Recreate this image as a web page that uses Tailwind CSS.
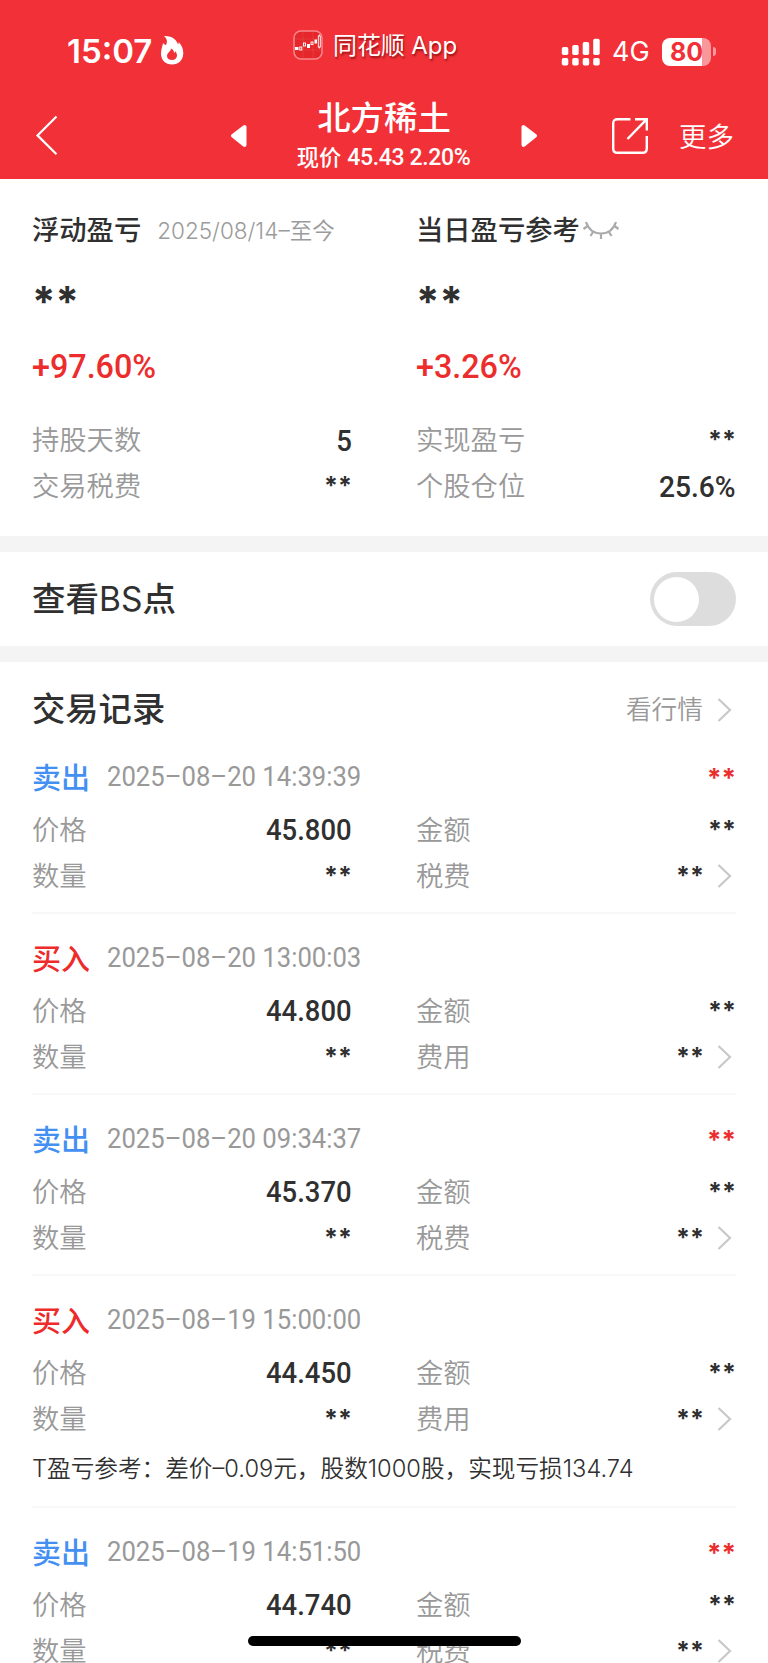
<!DOCTYPE html>
<html lang="zh-CN">
<head>
<meta charset="utf-8">
<title>北方稀土</title>
<script src="https://cdn.jsdelivr.net/npm/@tailwindcss/browser@4"></script>
</head>
<body class="w-[768px] h-[1663px] overflow-hidden relative bg-white text-[#303030] font-['Inter','Noto_Sans_CJK_SC',sans-serif] whitespace-nowrap">

<header class="h-[179px] bg-[#f23037] text-white">
  <div class="h-[90px] flex items-start">
    <div class="w-[293px] pl-[67px] pt-[31px] flex items-center">
      <span class="text-[33px] leading-[40px] font-semibold w-[91px]">15:07</span>
      <svg class="ml-[2px] -mt-[2px]" width="24" height="30" viewBox="0 0 24 30"><path fill="#fff" fill-rule="evenodd" d="M4 1C12 .5 17 5 18 9.500C18.500 9 18.700 8 18.600 7C21.800 10 23.300 14 23.300 18C23.300 25 18.500 29.500 12 29.500C5.500 29.500 1 25 1 18.700C1 14.500 2.500 11.500 3 8C4 9 5 10 6 10C7.500 7 7.500 4 4 1ZM11 13.500C11 16.500 7 17.500 7 21C7 23.500 9.200 25 12 25C15 25 17 23.200 17 20.500C17 18.500 16 17 15.200 16.200C15 17.200 14.600 17.800 14 18C14.200 16 13 14.500 11 13.500Z"/></svg>
    </div>
    <div class="pt-[30px] flex items-start w-[268px]">
      <svg width="30" height="30" viewBox="0 0 30 30"><rect x="1" y="1" width="28" height="28" rx="7" fill="#e5262b" stroke="#f7888c" stroke-width="1.500"/><g stroke="#f7888c" stroke-width=".2"><path d="M2 9H28M2 20H28M10 2V28M20 2V28"/></g><g fill="#fff"><rect x="2" y="17" width="3.500" height="3"/><rect x="14" y="14" width="3" height="4"/><rect x="21.500" y="9.500" width="2.500" height="4"/></g><g fill="none" stroke="#fff" stroke-width=".9"><rect x="6.800" y="17" width="2" height="3"/><rect x="10.500" y="13" width="2" height="3"/><rect x="18" y="12" width="2" height="2.500"/><rect x="25.300" y="6" width="2" height="11"/><path d="M26.300 4.500V6M26.300 17V18.500"/></g></svg>
      <span class="ml-[10px] text-[24px] leading-[31px] tracking-[-0.1px] [text-shadow:1px_2px_2px_rgba(90,0,0,0.6)]">同花顺 App</span>
    </div>
    <div class="pt-[37px] flex items-center">
      <svg width="40" height="28" viewBox="0 0 40 28" fill="#fff"><rect x=".8" y="9" width="6.500" height="8" rx="1.800"/><rect x="11.200" y="7" width="6.500" height="10" rx="1.800"/><rect x="21.700" y="4" width="6.500" height="13" rx="1.800"/><rect x="32.200" y=".8" width="6.500" height="16.200" rx="1.800"/><rect x=".8" y="20" width="6.500" height="7.500" rx="1.800"/><rect x="11.200" y="20" width="6.500" height="7.500" rx="1.800"/><rect x="21.700" y="20" width="6.500" height="7.500" rx="1.800"/><rect x="32.200" y="20" width="6.500" height="7.500" rx="1.800"/></svg>
      <span class="ml-[11px] w-[50px] text-[27px] leading-[28px] pt-px">4G</span>
      <div class="w-[49px] h-[28px] rounded-[8px] bg-[linear-gradient(90deg,#fff_0_81%,#f8989b_81%_100%)] text-[#f23037] text-[25px] leading-[28px] font-bold text-center">80</div>
      <div class="ml-[2px] w-[3px] h-[9px] rounded-r-full bg-[#f8989b]"></div>
    </div>
  </div>
  <div class="h-[89px] flex items-start">
    <svg class="ml-[35px] mt-[25px]" width="24" height="42" viewBox="0 0 24 42"><path d="M21.500 1.500L2.500 20.400L21.500 39.300" fill="none" stroke="#fff" stroke-width="2.200"/></svg>
    <svg class="ml-[171px] mt-[34px]" width="18" height="24" viewBox="0 0 18 24"><path d="M3 11.800L14.500 3V21Z" fill="#fff" stroke="#fff" stroke-width="4" stroke-linejoin="round"/></svg>
    <div class="w-[272px] text-center">
      <div class="mt-[8px] text-[33.400px] leading-[40px] font-medium">北方稀土</div>
      <div class="text-[22.300px] leading-[30px] mt-[4px] font-medium flex justify-center items-center gap-[6px]"><span>现价</span><span class="w-[124px] text-left font-['Roboto'] text-[23px] tracking-[-0.350px] pt-px">45.43 2.20%</span></div>
    </div>
    <svg class="mt-[34px]" width="18" height="24" viewBox="0 0 18 24"><path d="M15 11.800L3.500 3V21Z" fill="#fff" stroke="#fff" stroke-width="4" stroke-linejoin="round"/></svg>
    <svg class="ml-[73px] mt-[27px]" width="38" height="38" viewBox="0 0 38 38"><path d="M19.500 2.200H6.500Q2.200 2.200 2.200 6.500V31.500Q2.200 35.800 6.500 35.800H31.500Q35.800 35.800 35.800 31.500V19M24 2.200H35.800V13.500M35.300 2.700L16.500 22" fill="none" stroke="#fff" stroke-width="2.400"/></svg>
    <span class="ml-[30px] mt-[27px] text-[27.500px] leading-[40px] font-[350]">更多</span>
  </div>
</header>

<section class="h-[357px] px-8 grid grid-cols-[320px_320px] gap-x-[64px] pt-[32px]">
  <div class="w-[320px]">
    <div class="h-[40px] flex items-center"><span class="text-[27.300px] font-medium">浮动盈亏</span><span class="ml-[16px] text-[#9b9b9b] text-[22.500px] font-[350]">2025/08/14–至今</span></div>
    <div class="h-[44px] mt-[21px] flex items-center text-[42px] font-bold pt-[14px]">**</div>
    <div class="h-[40px] mt-[30px] flex items-center"><span class="font-['Roboto'] text-[34px] font-medium text-[#ec2d2d] inline-block origin-left scale-x-[0.95]">+97.60%</span></div>
    <div class="h-[46px] mt-[32px] flex items-center justify-between"><span class="text-[27.300px] font-[350] text-[#999]">持股天数</span><span class="font-['Roboto'] text-[30px] font-medium inline-block origin-right scale-x-[0.92] pb-[2px]">5</span></div>
    <div class="h-[46px] flex items-center justify-between"><span class="text-[27.300px] font-[350] text-[#999]">交易税费</span><span class="text-[25px] font-bold">**</span></div>
  </div>
  <div class="w-[320px]">
    <div class="h-[40px] flex items-center"><span class="text-[27.300px] font-medium">当日盈亏参考</span>
      <svg class="ml-[2px] -mt-[2px]" width="38" height="20" viewBox="0 0 38 20"><path d="M4 2Q8 13.500 19 13.500Q30 13.500 34 2M5.500 6L1.500 9M32.500 6L36.500 9M11 12L8.500 16M27 12L29.500 16M19 13.500V19" fill="none" stroke="#aaa" stroke-width="2.200"/></svg></div>
    <div class="h-[44px] mt-[21px] flex items-center text-[42px] font-bold pt-[14px]">**</div>
    <div class="h-[40px] mt-[30px] flex items-center"><span class="font-['Roboto'] text-[34px] font-medium text-[#ec2d2d] inline-block origin-left scale-x-[0.95]">+3.26%</span></div>
    <div class="h-[46px] mt-[32px] flex items-center justify-between"><span class="text-[27.300px] font-[350] text-[#999]">实现盈亏</span><span class="text-[25px] font-bold">**</span></div>
    <div class="h-[46px] flex items-center justify-between"><span class="text-[27.300px] font-[350] text-[#999]">个股仓位</span><span class="font-['Roboto'] text-[30px] font-medium inline-block origin-right scale-x-[0.94] pb-px">25.6%</span></div>
  </div>
</section>

<section class="h-[126px] border-y-[16px] border-[#f4f4f4] px-8 flex items-center justify-between">
  <span class="text-[33.500px] font-medium"><span>查看</span><span class="font-normal">BS</span><span>点</span></span>
  <div class="w-[86px] h-[54px] rounded-full bg-[#ddd] p-[4px] flex items-center"><div class="size-[45px] rounded-full bg-white"></div></div>
</section>

<main class="px-8">
  <div class="h-[94px] flex items-center justify-between">
    <h2 class="text-[33.300px] font-medium pt-px">交易记录</h2>
    <div class="flex items-center pt-[2px] text-[25.700px] font-[350] text-[#999]">看行情<svg class="ml-[14px] mr-[4px]" width="15" height="24" viewBox="0 0 15 24"><path d="M1.500 1L13 12L1.500 23" fill="none" stroke="#c8c8c8" stroke-width="2.200"/></svg></div>
  </div>
  <div id="records"></div>
</main>

<div class="absolute left-[248px] top-[1636px] w-[273px] h-[10px] rounded-full bg-black"></div>

<script>
const records = [
  ['卖出', '2025–08–20 14:39:39', '45.800', '税费'],
  ['买入', '2025–08–20 13:00:03', '44.800', '费用'],
  ['卖出', '2025–08–20 09:34:37', '45.370', '税费'],
  ['买入', '2025–08–19 15:00:00', '44.450', '费用', 'T盈亏参考：差价–0.09元，股数1000股，实现亏损134.74'],
  ['卖出', '2025–08–19 14:51:50', '44.740', '税费'],
];
document.getElementById('records').innerHTML = records.map(([side, time, price, fee, note]) => `
  <article class="border-b-2 border-[#f8f8f8] ${note ? 'h-[209px]' : 'h-[158px]'} mb-[23px]">
    <div class="h-[46px] flex items-center">
      <span class="text-[29px] font-medium ${side === '卖出' ? 'text-[#4390f2]' : 'text-[#ee2a2a]'}">${side}</span>
      <span class="ml-[17px] font-['Roboto'] text-[28px] text-[#999] inline-block origin-left scale-x-[0.916] pb-[4px]">${time}</span>
      <span class="ml-auto text-[26px] font-bold text-[#ec2d2d] pb-[4px]">${side === '卖出' ? '**' : ''}</span>
    </div>
    <div class="mt-[5px] h-[46px] grid grid-cols-[320px_320px] gap-x-[64px] items-center">
      <div class="flex items-center justify-between"><span class="text-[27.300px] font-[350] text-[#999]">价格</span><span class="font-['Roboto'] text-[30px] font-medium inline-block origin-right scale-x-[0.915] pb-[4px]">${price}</span></div>
      <div class="flex items-center justify-between"><span class="text-[27.300px] font-[350] text-[#999]">金额</span><span class="text-[25px] font-bold pb-px">**</span></div>
    </div>
    <div class="mt-px h-[46px] grid grid-cols-[320px_320px] gap-x-[64px] items-center">
      <div class="flex items-center justify-between"><span class="text-[27.300px] font-[350] text-[#999]">数量</span><span class="text-[25px] font-bold pb-px">**</span></div>
      <div class="flex items-center"><span class="text-[27.300px] font-[350] text-[#999]">${fee}</span><span class="ml-auto text-[25px] font-bold pb-px">**</span><svg class="ml-[13px] mr-[4px] -mt-[2px]" width="15" height="24" viewBox="0 0 15 24"><path d="M1.500 1L13 12L1.500 23" fill="none" stroke="#c8c8c8" stroke-width="2.200"/></svg></div>
    </div>
    ${note ? `<p class="mt-[6px] h-[40px] leading-[39px] text-[23.650px] font-[350]">${note}</p>` : ''}
  </article>`).join('');
</script>
</body>
</html>
